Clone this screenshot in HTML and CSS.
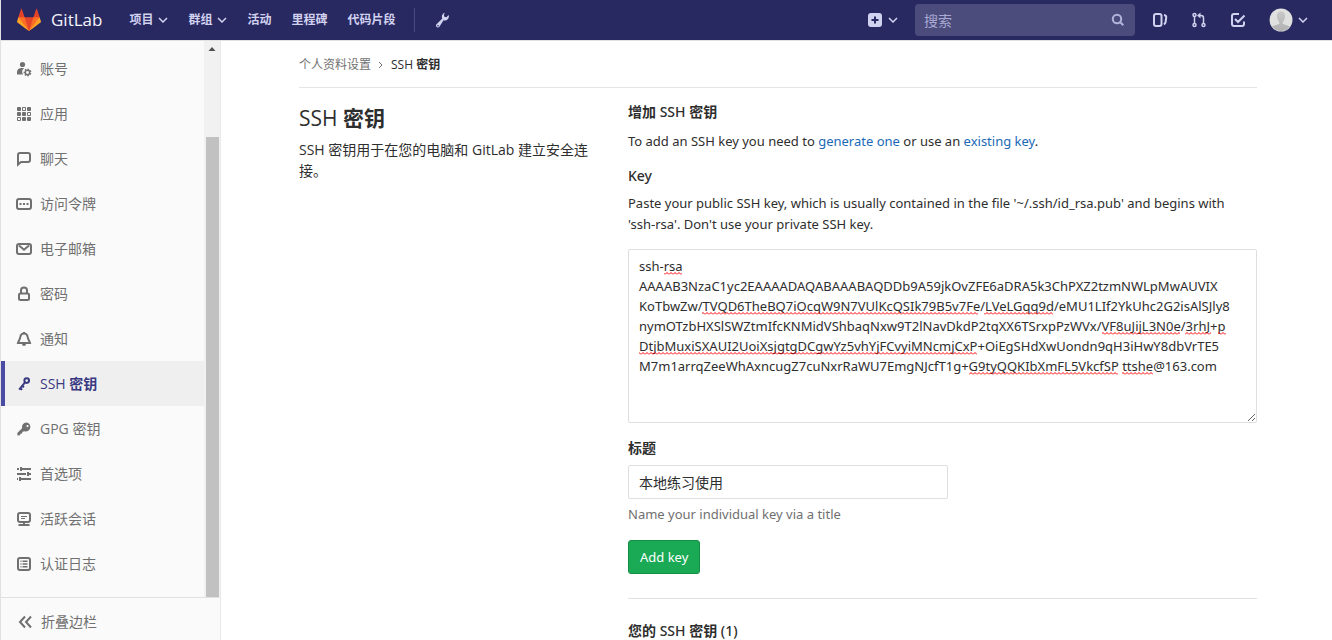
FILE: index.html
```html
<!DOCTYPE html>
<html lang="zh-CN">
<head>
<meta charset="utf-8">
<meta name="viewport" content="width=device-width, initial-scale=1">
<title>SSH 密钥 · GitLab</title>
<link rel="stylesheet" href="styles.css">
</head>
<body>
<header class="navbar">
  <a class="brand" href="#">
    <svg class="logo" viewBox="0 0 36 36" aria-hidden="true">
      <path fill="#e24329" d="M2 14l9.38 9v-9l-4-12.28c-.205-.632-1.176-.632-1.38 0z"/>
      <path fill="#e24329" d="M34 14l-9.38 9v-9l4-12.28c.205-.632 1.176-.632 1.38 0z"/>
      <path fill="#e24329" d="M18 34.38 3 14 33 14z"/>
      <path fill="#fc6d26" d="M18 34.38 11.38 14 2 14 6 25z"/>
      <path fill="#fc6d26" d="M18 34.38 24.62 14 34 14 30 25z"/>
      <path fill="#fca326" d="M2 14 .1 20.16c-.18.565 0 1.2.5 1.56l17.42 12.66z"/>
      <path fill="#fca326" d="M34 14l1.9 6.16c.18.565 0 1.2-.5 1.56L18 34.38z"/>
    </svg>
    <span>GitLab</span>
  </a>
  <nav class="menu" aria-label="主导航">
    <button class="menu-item" type="button">项目 <svg class="caret" viewBox="0 0 10 6"><path d="M1 1l4 4 4-4"/></svg></button>
    <button class="menu-item" type="button">群组 <svg class="caret" viewBox="0 0 10 6"><path d="M1 1l4 4 4-4"/></svg></button>
    <a class="menu-item" href="#">活动</a>
    <a class="menu-item" href="#">里程碑</a>
    <a class="menu-item" href="#">代码片段</a>
  </nav>
  <a class="admin" href="#" aria-label="管理区域">
    <svg class="icon" viewBox="0 0 16 16"><path fill="currentColor" fill-rule="evenodd" d="M10.8.8a4 4 0 0 0-2.500 5.700L2.500 12.200a1.900 1.900 0 1 0 2.900 2.500l4.200-6.500a4 4 0 0 0 5-5.200l-2.200 2.300-2-.5-.5-2zM4 13a.8.8 0 1 1 0 1.600A.8.8 0 0 1 4 13z"/></svg>
  </a>
  <div class="tools">
    <button class="tool" type="button" aria-label="新建">
      <svg class="icon" viewBox="0 0 16 16"><path fill="currentColor" fill-rule="evenodd" d="M4 1h8a3 3 0 0 1 3 3v8a3 3 0 0 1-3 3H4a3 3 0 0 1-3-3V4a3 3 0 0 1 3-3zm3 3.500V7H4.500v2H7v2.500h2V9h2.500V7H9V4.500z"/></svg>
      <svg class="caret" viewBox="0 0 10 6"><path d="M1 1l4 4 4-4"/></svg>
    </button>
    <form class="search">
      <input type="search" placeholder="搜索" aria-label="搜索">
      <svg class="search-icon" viewBox="0 0 14 14"><circle cx="6" cy="6" r="4.200"/><path d="M9.300 9.300l3 3"/></svg>
    </form>
    <a class="tool" href="#" aria-label="议题">
      <svg class="icon line" viewBox="0 0 16 16"><rect x="2" y="2" width="7.500" height="12" rx="2"/><path d="M12 3c2 .4 2.400 1 2.200 2.500L13.600 10c-.2 1.500-.8 2-1.800 2.300"/></svg>
    </a>
    <a class="tool" href="#" aria-label="合并请求">
      <svg class="icon fine" viewBox="0 0 16 16"><circle cx="3.500" cy="3" r="1.500"/><circle cx="3.500" cy="13" r="1.500"/><circle cx="12.500" cy="13" r="1.500"/><path d="M3.500 4.500v7M12.500 11.500V6a2.500 2.500 0 0 0-2.500-2.500H7.500"/><path fill="currentColor" stroke="none" d="M9.500.5v6l-3.500-3z"/></svg>
    </a>
    <a class="tool" href="#" aria-label="待办事项">
      <svg class="icon line" viewBox="0 0 16 16"><path d="M9 2H4a2 2 0 0 0-2 2v8a2 2 0 0 0 2 2h8a2 2 0 0 0 2-2V9.500M5 7l3 3 6.500-6.500"/></svg>
    </a>
    <button class="tool user" type="button" aria-label="用户菜单">
      <svg class="avatar" viewBox="0 0 24 24"><defs><clipPath id="round"><circle cx="12" cy="12" r="11"/></clipPath><linearGradient id="shade" x2="0" y2="1"><stop stop-color="#c8c8c8"/><stop offset="1" stop-color="#b0b0b0"/></linearGradient></defs><circle cx="12" cy="12" r="11.500" fill="#e0e0e0"/><path clip-path="url(#round)" fill="url(#shade)" d="M12 3.500c-3 0-4.200 2-4 5 .1 2.500 1 4.500 2.300 5.500v1.700C8 17 3.500 17 2 20v4h20v-4c-1.500-3-6-3-8.300-4.300V14c1.300-1 2.200-3 2.300-5.500.2-3-1-5-4-5z"/></svg>
      <svg class="caret" viewBox="0 0 10 6"><path d="M1 1l4 4 4-4"/></svg>
    </button>
  </div>
</header>

<div class="page">
  <aside class="sidebar">
    <div class="side-scroll">
      <nav class="side-nav" aria-label="用户设置">
        <a href="#"><svg class="icon" viewBox="0 0 16 16"><g fill="currentColor"><circle cx="6.500" cy="3.500" r="2.600"/><path d="M1 13.500V11c0-2.500 2-4 4.500-4h2.700A5 5 0 0 0 7 13.500z"/></g><circle class="stroke" cx="11.500" cy="11.500" r="2.200"/><path class="stroke" stroke-dasharray="1.500 1.300" d="M11.500 8.300a3.200 3.200 0 1 1 0 6.400 3.200 3.200 0 0 1 0-6.400"/></svg>账号</a>
        <a href="#"><svg class="icon" viewBox="0 0 16 16"><g fill="currentColor"><rect x="1" y="1" width="4" height="4" rx="1"/><rect x="11" y="1" width="4" height="4" rx="1"/><rect x="1" y="6" width="4" height="4" rx="1"/><rect x="6" y="6" width="4" height="4" rx="1"/><rect x="6" y="11" width="4" height="4" rx="1"/><rect x="11" y="11" width="4" height="4" rx="1"/></g><path fill="none" stroke="currentColor" d="M6.500 1.500h3v3h-3zM11.500 6.500h3v3h-3zM1.500 11.500h3v3h-3z"/></svg>应用</a>
        <a href="#"><svg class="icon line" viewBox="0 0 16 16"><path d="M2 13.500V4a2 2 0 0 1 2-2h8a2 2 0 0 1 2 2v5a2 2 0 0 1-2 2H5z"/></svg>聊天</a>
        <a href="#"><svg class="icon line" viewBox="0 0 16 16"><rect x="1" y="3" width="14" height="10" rx="2"/><path d="M3.500 8h2M7 8h2M10.500 8h2"/></svg>访问令牌</a>
        <a href="#"><svg class="icon line" viewBox="0 0 16 16"><rect x="1" y="3" width="14" height="10" rx="2"/><path d="M3 4.500l5 4.200 5-4.200"/></svg>电子邮箱</a>
        <a href="#"><svg class="icon line" viewBox="0 0 16 16"><rect x="3" y="7.500" width="10" height="6.500" rx="1.500"/><path d="M5 7V4.500a3 3 0 0 1 6 0V7"/></svg>密码</a>
        <a href="#"><svg class="icon line" viewBox="0 0 16 16"><path d="M8 2.500c-2.300 0-3.500 1.700-3.800 4C4 8.500 2.500 10 2 12h12c-.5-2-2-3.500-2.200-5.500-.3-2.300-1.500-4-3.800-4z"/><path fill="currentColor" stroke="none" d="M6 13h4a2 2 0 0 1-4 0zM7 1h2v2H7z"/></svg>通知</a>
        <a class="active" href="#" aria-current="page"><svg class="icon line" viewBox="0 0 16 16"><circle cx="10.700" cy="4.600" r="2.300"/><path d="M9 6.400l-5.800 7.200M4 12.200l2.200 1.600M6 9.800l2 1.500"/></svg><span>SSH <b>密钥</b></span></a>
        <a href="#"><svg class="icon" viewBox="0 0 16 16"><path fill="currentColor" fill-rule="evenodd" d="M10.500 1.500a4.500 4.500 0 0 0-4.400 5.700L1.300 12l.2 2.500 2.500-.2.500-1.500 1.500-.2.500-1.800 2.200-.5a4.500 4.500 0 1 0 1.800-8.800zm1 2.500a1.100 1.100 0 1 1 0 2.200 1.100 1.100 0 0 1 0-2.200z"/></svg>GPG 密钥</a>
        <a href="#"><svg class="icon" viewBox="0 0 16 16"><path fill="currentColor" d="M1 2h2v2H1zM5 2h10v2H5zM4 1h2v4H4zM1 7h9v2H1zM13 7h2v2h-2zM11 6h2v4h-2zM1 12h1v2H1zM5 12h10v2H5zM3 11h2v4H3z"/></svg>首选项</a>
        <a href="#"><svg class="icon line" viewBox="0 0 16 16"><rect x="2" y="2" width="12" height="9" rx="2"/><path d="M8 11v3M2.500 14h11"/><path stroke-width="1" d="M5 5.500h6M5 7.500h4"/></svg>活跃会话</a>
        <a href="#"><svg class="icon line" viewBox="0 0 16 16"><rect x="2" y="2" width="12" height="12" rx="2"/><path stroke-width="1.500" d="M4.500 5.200h1M6.500 5.200h5M4.500 8h1M6.500 8h5M4.500 10.800h1M6.500 10.800h5"/></svg>认证日志</a>
      </nav>
      <div class="scrollbar" aria-hidden="true">
        <svg class="scroll-arrow" viewBox="0 0 15 15"><path fill="#505050" d="M4 10l3.500-4 3.500 4z"/></svg>
        <div class="scroll-thumb"></div>
      </div>
    </div>
    <button class="collapse" type="button"><svg class="icon line" viewBox="0 0 16 16"><path d="M8 2.500L3 8l5 5.500M14 2.500L9 8l5 5.500"/></svg>折叠边栏</button>
  </aside>

  <main class="content">
    <div class="container">
      <nav class="breadcrumb" aria-label="路径">
        <a href="#">个人资料设置</a>
        <svg class="crumb-arrow" viewBox="0 0 6 8"><path d="M1 1l3 3-3 3"/></svg>
        <span class="current">SSH <b>密钥</b></span>
      </nav>
      <div class="columns">
        <section class="intro">
          <h1>SSH <b>密钥</b></h1>
          <p>SSH 密钥用于在您的电脑和 GitLab 建立安全连接。</p>
        </section>
        <section class="details">
          <h2><b>增加</b> SSH <b>密钥</b></h2>
          <p class="lead">To add an SSH key you need to <a href="#">generate one</a> or use an <a href="#">existing key</a>.</p>
          <form class="key-form">
            <label for="key">Key</label>
            <p class="help">Paste your public SSH key, which is usually contained in the file '~/.ssh/id_rsa.pub' and begins with 'ssh-rsa'. Don't use your private SSH key.</p>
            <div class="key-box">
              <textarea id="key" spellcheck="false">ssh-rsa
AAAAB3NzaC1yc2EAAAADAQABAAABAQDDb9A59jkOvZFE6aDRA5k3ChPXZ2tzmNWLpMwAUVIX
KoTbwZw/TVQD6TheBQ7iOcqW9N7VUlKcQSIk79B5v7Fe/LVeLGqq9d/eMU1LIf2YkUhc2G2isAlSJly8
nymOTzbHXSlSWZtmIfcKNMidVShbaqNxw9T2lNavDkdP2tqXX6TSrxpPzWVx/VF8uJijL3N0e/3rhJ+p
DtjbMuxiSXAUI2UoiXsjgtgDCgwYz5vhYjFCvyiMNcmjCxP+OiEgSHdXwUondn9qH3iHwY8dbVrTE5
M7m1arrqZeeWhAxncugZ7cuNxrRaWU7EmgNJcfT1g+G9tyQQKIbXmFL5VkcfSP ttshe@163.com</textarea>
              <svg class="squiggles" width="626" height="172" aria-hidden="true">
                <defs><pattern id="wave" width="4" height="20" patternUnits="userSpaceOnUse"><path d="M0 4.500l2-2 2 2" fill="none" stroke="#f00"/></pattern></defs>
                <g fill="url(#wave)">
                  <rect x="35" y="20" width="18" height="8"/>
                  <rect x="73" y="60" width="276" height="8"/>
                  <rect x="355" y="60" width="69" height="8"/>
                  <rect x="473" y="80" width="78" height="8"/>
                  <rect x="556" y="80" width="26" height="8"/>
                  <rect x="589" y="80" width="8" height="8"/>
                  <rect x="10" y="100" width="338" height="8"/>
                  <rect x="340" y="120" width="149" height="8"/>
                  <rect x="493" y="120" width="31" height="8"/>
                </g>
              </svg>
            </div>
            <label for="title"><b>标题</b></label>
            <input id="title" type="text" value="本地练习使用">
            <p class="hint">Name your individual key via a title</p>
            <button class="submit" type="button">Add key</button>
          </form>
          <h2 class="keys"><b>您的</b> SSH <b>密钥</b> (1)</h2>
        </section>
      </div>
    </div>
  </main>
</div>
</body>
</html>
```

FILE: styles.css
```css
* { box-sizing: border-box; }
html, body { height: 100%; }
body {
  margin: 0;
  display: flex;
  flex-direction: column;
  overflow: hidden;
  border-left: 1px solid #e1e1e1;
  background: #fff;
  color: #2e2e2e;
  font: 14px/20px "Open Sans", "Noto Sans CJK SC", sans-serif;
}
button, input, textarea { font: inherit; color: inherit; }
button { border: 0; padding: 0; background: none; cursor: pointer; }
a { color: #1b69b6; text-decoration: none; }
h1, h2, p { margin: 0; }

.icon { width: 16px; height: 16px; flex: none; }
.line, .stroke { fill: none; stroke: currentColor; stroke-width: 2; }
.stroke { stroke-width: 1.5; }
.fine { fill: none; stroke: currentColor; stroke-width: 1.5; }
.caret { width: 10px; height: 6px; fill: none; stroke: currentColor; stroke-width: 1.5; }

.navbar {
  flex: none;
  display: flex;
  align-items: center;
  height: 41px;
  padding: 0 24px 0 16px;
  border-bottom: 1px solid #e1e1e1;
  background: #292961;
  color: #d1d1f0;
}
.brand { display: flex; align-items: center; gap: 10px; color: #f4f4fb; font-size: 17px; }
.logo { width: 24px; height: 24px; }
.menu { display: flex; gap: 20px; margin-left: 27px; }
.menu-item { display: flex; align-items: center; gap: 5px; color: inherit; font-size: 12px; font-weight: 700; }
.admin { display: flex; margin-left: 18px; padding: 4px 0 4px 19px; border-left: 1px solid #4a4a83; color: inherit; }
.tools { display: flex; align-items: center; gap: 23px; margin-left: auto; }
.tool { display: flex; align-items: center; gap: 5px; color: inherit; }
.search { position: relative; width: 220px; margin: 0 -6px; }
.search input {
  display: block;
  width: 100%;
  height: 32px;
  padding: 0 32px 0 9px;
  border: 0;
  border-radius: 4px;
  background: #4c4c7c;
}
.search input::placeholder { color: #a9a9d4; opacity: 1; }
.search-icon { position: absolute; top: 9px; right: 10px; width: 14px; height: 14px; fill: none; stroke: #b4b4dc; stroke-width: 2; }
.avatar { width: 24px; height: 24px; }

.page { flex: 1; display: flex; min-height: 0; }
.sidebar {
  flex: none;
  display: flex;
  flex-direction: column;
  width: 220px;
  border-right: 1px solid #e9e9e9;
  background: #fafafa;
  color: #707070;
}
.side-scroll { flex: 1; display: flex; min-height: 0; }
.side-nav { flex: 1; padding-top: 5px; overflow: hidden; }
.side-nav a { display: flex; align-items: center; gap: 8px; height: 45px; padding-left: 15px; color: inherit; }
.side-nav .active { padding-left: 11px; border-left: 4px solid #4b4ba3; background: #efefef; color: #393982; }
.scrollbar { width: 16px; display: flex; flex-direction: column; background: #f1f1f1; }
.scroll-arrow { width: 16px; height: 15px; }
.scroll-thumb { flex: 1; margin: 81px 1px 0 2px; background: #c1c1c1; }
.collapse { display: flex; align-items: center; gap: 8px; height: 43px; padding: 6px 16px 0; border-top: 1px solid #e1e1e1; }

.content { flex: 1; min-width: 0; padding: 0 16px 0 19px; overflow: hidden; }
.container { max-width: 958px; margin: 0 auto; }
.breadcrumb {
  display: flex;
  align-items: center;
  gap: 7px;
  height: 47px;
  padding-top: 2px;
  border-bottom: 1px solid #e5e5e5;
  font-size: 12px;
}
.breadcrumb a { color: #707070; }
.crumb-arrow { width: 6px; height: 8px; fill: none; stroke: #707070; }
.current { font-weight: 500; }
.columns { display: grid; grid-template-columns: 299fr 629fr; gap: 30px; }
h1 { margin-top: 16px; font-size: 21px; line-height: 28px; font-weight: 400; }
.intro p { margin-top: 7px; line-height: 21px; }
h2 { font-size: 14px; line-height: 20px; font-weight: 500; }
.details { padding-top: 14px; font-family: "Noto Sans", "Noto Sans CJK SC", sans-serif; }
.lead, .help, .hint, .key-form textarea, .submit { font-size: 13px; }
.lead { margin-top: 9px; }
.key-form { padding-bottom: 24px; border-bottom: 1px solid #e1e1e1; }
.key-form label { display: block; margin-top: 15px; font-weight: 500; }
.help { margin-top: 7px; padding-right: 16px; line-height: 21px; }
.key-box { position: relative; margin-top: 14px; }
.key-form textarea, .key-form input {
  display: block;
  padding: 6px 10px;
  border: 1px solid #dfdfdf;
  border-radius: 2px;
  background: #fff;
}
.key-form textarea { width: 100%; height: 174px; resize: vertical; white-space: pre; overflow: hidden; }
.squiggles { position: absolute; top: 1px; left: 1px; pointer-events: none; }
.key-form input { width: 320px; height: 34px; margin-top: 7px; }
.hint { margin-top: 5px; color: #707070; }
.submit { height: 34px; margin-top: 16px; padding: 0 11px; border: 1px solid #168f48; border-radius: 3px; background: #1aaa55; color: #fff; }
.keys { margin-top: 22px; }
```
